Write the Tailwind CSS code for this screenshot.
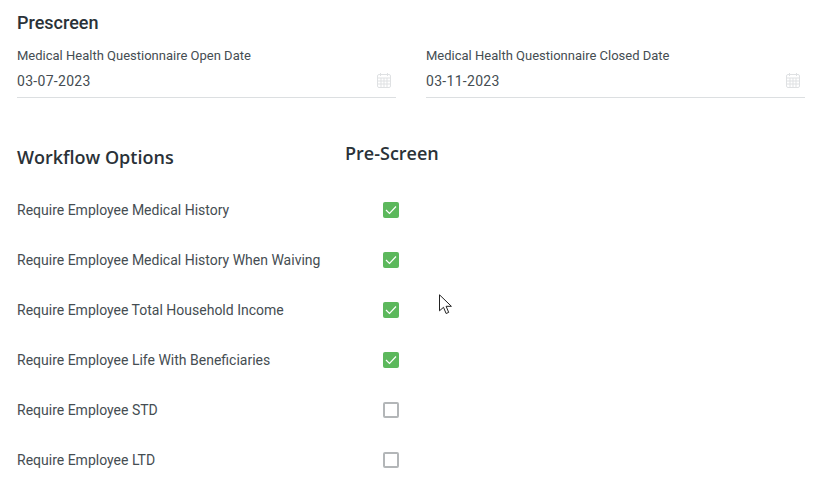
<!doctype html>
<html><head><script src="https://cdn.jsdelivr.net/npm/@tailwindcss/browser@4"></script></head>
<body class="bg-white">
<div class="relative w-[820px] h-[488px] overflow-hidden bg-white font-['Roboto',sans-serif] text-[#454d52] pl-[17px]">
  <h2 class="font-medium text-[18px] leading-[22px] pt-3 text-[#2a3238]">Prescreen</h2>
  <div class="flex gap-[30px] mt-[14px]">
    <div class="w-[379px]">
      <div class="text-[13px] leading-[16px]">Medical Health Questionnaire Open Date</div>
      <div class="flex items-center justify-between h-[34px] border-b border-[#dcdfe1] text-[14px] tracking-[0.3px] pr-[5px]"><span class="pt-[2px]">03-07-2023</span>
        <svg width="14" height="15" viewBox="0 0 14 15" fill="none" stroke="#dfe1e3"><rect x=".5" y="1.5" width="13" height="13" rx="1.5"/><path d="M.5 5h13M.5 8h13M.5 11h13M4 5v9M7 5v9M10 5v9M3.500 0v3M10.500 0v3"/></svg></div>
    </div>
    <div class="w-[379px]">
      <div class="text-[13px] leading-[16px]">Medical Health Questionnaire Closed Date</div>
      <div class="flex items-center justify-between h-[34px] border-b border-[#dcdfe1] text-[14px] tracking-[0.3px] pr-[5px]"><span class="pt-[2px]">03-11-2023</span>
        <svg width="14" height="15" viewBox="0 0 14 15" fill="none" stroke="#dfe1e3"><rect x=".5" y="1.5" width="13" height="13" rx="1.5"/><path d="M.5 5h13M.5 8h13M.5 11h13M4 5v9M7 5v9M10 5v9M3.500 0v3M10.500 0v3"/></svg></div>
    </div>
  </div>
  <div class="flex items-end w-[440px] h-[40px] mt-[31px]">
    <div class="w-[328px] font-['Open_Sans',sans-serif] font-semibold text-[18px] leading-[24px] text-[#2a3238]">Workflow Options</div>
    <div class="font-['Open_Sans',sans-serif] font-semibold text-[18px] leading-[24px] pb-1 text-[#2a3238]">Pre-Screen</div>
  </div>
  <div class="mt-[16px] text-[14px]">
    <div class="flex items-center h-[50px]"><span class="w-[366px]">Require Employee Medical History</span><span class="w-4 h-4 rounded-[2px] bg-[#5cb85c] flex items-center justify-center"><svg width="12" height="10" viewBox="0 0 12 10" fill="none" stroke="#fff" stroke-width="1.200"><path d="M1 5l3.500 3.500L11 1.500"/></svg></span></div>
    <div class="flex items-center h-[50px]"><span class="w-[366px]">Require Employee Medical History When Waiving</span><span class="w-4 h-4 rounded-[2px] bg-[#5cb85c] flex items-center justify-center"><svg width="12" height="10" viewBox="0 0 12 10" fill="none" stroke="#fff" stroke-width="1.200"><path d="M1 5l3.500 3.500L11 1.500"/></svg></span></div>
    <div class="flex items-center h-[50px]"><span class="w-[366px]">Require Employee Total Household Income</span><span class="w-4 h-4 rounded-[2px] bg-[#5cb85c] flex items-center justify-center"><svg width="12" height="10" viewBox="0 0 12 10" fill="none" stroke="#fff" stroke-width="1.200"><path d="M1 5l3.500 3.500L11 1.500"/></svg></span></div>
    <div class="flex items-center h-[50px]"><span class="w-[366px]">Require Employee Life With Beneficiaries</span><span class="w-4 h-4 rounded-[2px] bg-[#5cb85c] flex items-center justify-center"><svg width="12" height="10" viewBox="0 0 12 10" fill="none" stroke="#fff" stroke-width="1.200"><path d="M1 5l3.500 3.500L11 1.500"/></svg></span></div>
    <div class="flex items-center h-[50px]"><span class="w-[366px]">Require Employee STD</span><span class="w-4 h-4 rounded-[2px] border-2 border-[#b3b6b8]"></span></div>
    <div class="flex items-center h-[50px]"><span class="w-[366px]">Require Employee LTD</span><span class="w-4 h-4 rounded-[2px] border-2 border-[#b3b6b8]"></span></div>
  </div>
  <svg class="absolute left-[439px] top-[294px]" width="13" height="21" viewBox="0 0 13 21" fill="#fff" stroke="#222" stroke-width="1"><path d="M.5.800v16l4-3.500 2.600 6.200 2.600-1.100-2.600-6.100h5.300z"/></svg>
</div>
</body></html>
